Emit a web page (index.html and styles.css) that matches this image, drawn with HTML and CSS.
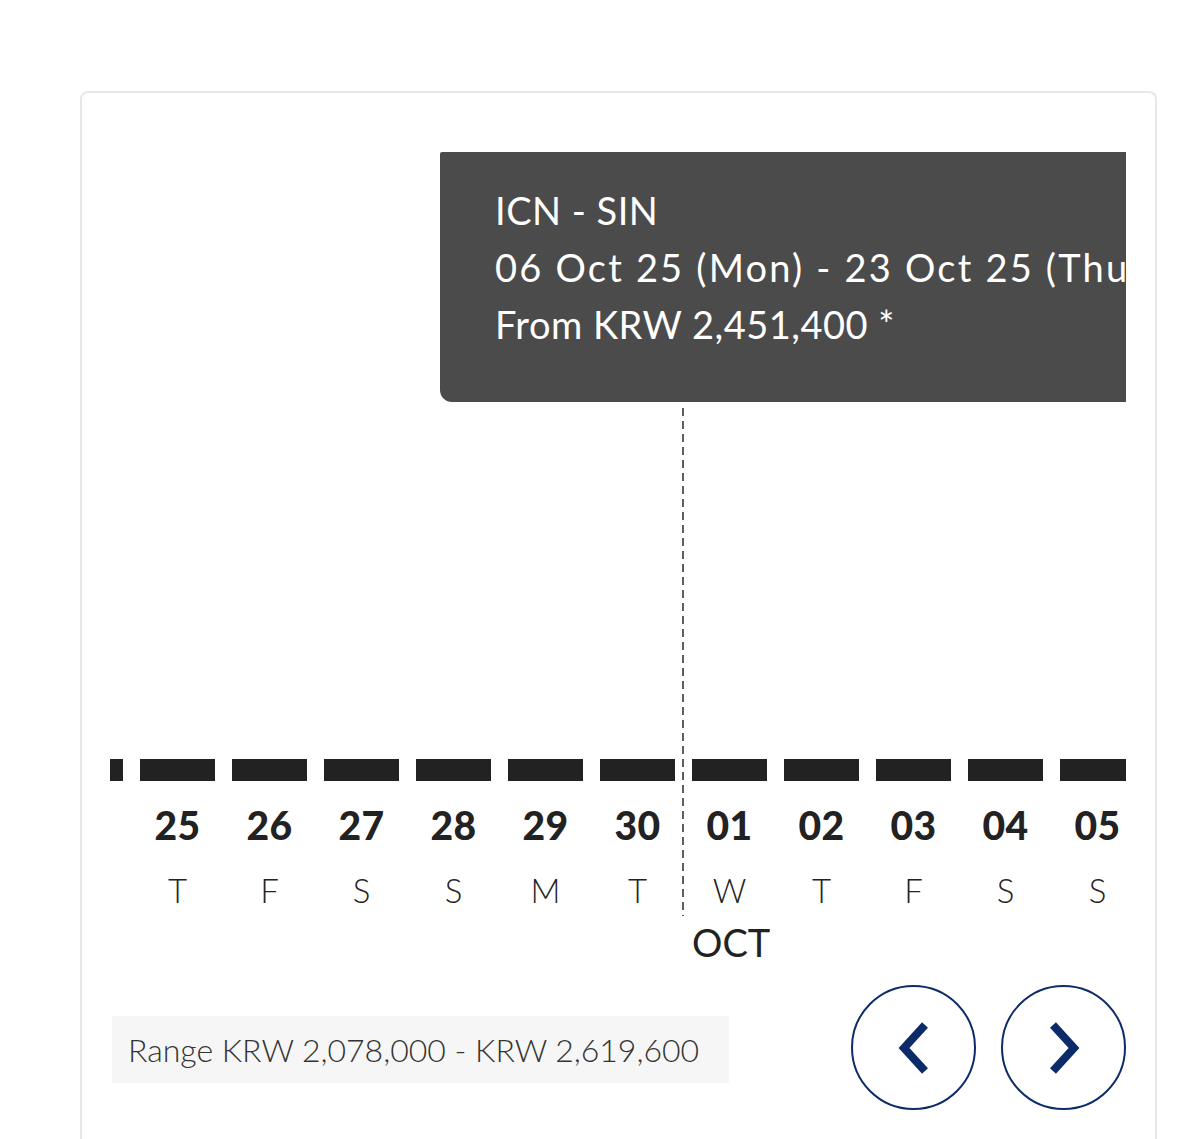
FILE: index.html
```html
<!DOCTYPE html>
<html lang="en">
<head>
    <meta charset="UTF-8">
    <meta name="viewport" content="width=device-width, initial-scale=1.0">
    <title>Fare Calendar</title>
    <link rel="stylesheet" href="styles.css">
</head>
<body>
    <div class="card">
        <div class="chart">
            <div class="tooltip">
                <p>ICN - SIN</p>
                <p class="dates">06 Oct 25 (Mon) - 23 Oct 25 (Thu)</p>
                <p>From KRW 2,451,400 *</p>
            </div>
            <div class="guide"></div>

            <div class="days">
                <div class="day"><div class="bar"></div></div>
                <div class="day"><div class="bar"></div><div class="num">25</div><div class="dow">T</div></div>
                <div class="day"><div class="bar"></div><div class="num">26</div><div class="dow">F</div></div>
                <div class="day"><div class="bar"></div><div class="num">27</div><div class="dow">S</div></div>
                <div class="day"><div class="bar"></div><div class="num">28</div><div class="dow">S</div></div>
                <div class="day"><div class="bar"></div><div class="num">29</div><div class="dow">M</div></div>
                <div class="day"><div class="bar"></div><div class="num">30</div><div class="dow">T</div></div>
                <div class="day"><div class="bar"></div><div class="num">01</div><div class="dow">W</div><div class="month">OCT</div></div>
                <div class="day"><div class="bar"></div><div class="num">02</div><div class="dow">T</div></div>
                <div class="day"><div class="bar"></div><div class="num">03</div><div class="dow">F</div></div>
                <div class="day"><div class="bar"></div><div class="num">04</div><div class="dow">S</div></div>
                <div class="day"><div class="bar"></div><div class="num">05</div><div class="dow">S</div></div>
            </div>
        </div>

        <div class="footer">
            <div class="range">Range KRW 2,078,000 - KRW 2,619,600</div>
            <div class="arrows">
                <button class="arrow" aria-label="Previous">
                    <svg width="36" height="56" viewBox="0 0 36 56"><polyline points="29,5 8,28 29,51" /></svg>
                </button>
                <button class="arrow" aria-label="Next">
                    <svg width="36" height="56" viewBox="0 0 36 56"><polyline points="7,5 28,28 7,51" /></svg>
                </button>
            </div>
        </div>
    </div>
</body>
</html>
```

FILE: styles.css
```css
body {
    margin: 0;
    background-color: #fff;
    font-family: "Lato", "Noto Sans", sans-serif;
    color: #222;
}
.card {
    box-sizing: border-box;
    width: 1077px;
    height: 1048px;
    margin: 91px 0 0 80px;
    padding: 0 29px 0 28px;
    border: 2px solid #e8e8ea;
    border-bottom: none;
    border-radius: 8px 8px 0 0;
    overflow: hidden;
}
.chart {
    position: relative;
    height: 892px;
    overflow: hidden;
}
.tooltip {
    position: absolute;
    left: 330px;
    top: 59px;
    width: 760px;
    height: 250px;
    box-sizing: border-box;
    padding: 30px 0 0 55px;
    background-color: #4b4b4b;
    border-radius: 2px 0 0 12px;
    color: #fff;
    font-size: 38px;
    letter-spacing: 0.5px;
    white-space: nowrap;
}
.tooltip p {
    margin: 0;
    line-height: 57px;
}
.tooltip .dates {
    letter-spacing: 2.2px;
}
.guide {
    position: absolute;
    left: 572px;
    top: 315px;
    width: 2px;
    height: 508px;
    background: repeating-linear-gradient(to bottom, #5e5e5e 0, #5e5e5e 8px, transparent 8px, transparent 13px);
}
.days {
    display: flex;
    gap: 17px;
    margin-left: -62px;
    padding-top: 666px;
}
.day {
    flex-shrink: 0;
    width: 75px;
    text-align: center;
}
.bar {
    height: 22px;
    background-color: #222;
}
.num {
    margin-top: 22px;
    font-size: 39px;
    font-weight: 900;
    line-height: 44px;
    letter-spacing: 0.5px;
}
.dow {
    margin-top: 23px;
    font-size: 33px;
    font-weight: 300;
    line-height: 40px;
}
.month {
    margin-top: 10px;
    font-size: 38px;
    line-height: 44px;
}
.footer {
    display: flex;
    justify-content: space-between;
    align-items: center;
}
.range {
    margin: 4px 0 0 2px;
    padding: 0 30px 0 16px;
    height: 67px;
    line-height: 68px;
    background-color: #f6f6f6;
    font-size: 32px;
    font-weight: 300;
    color: #333;
}
.arrows {
    display: flex;
    gap: 25px;
}
.arrow {
    display: flex;
    align-items: center;
    justify-content: center;
    width: 125px;
    height: 125px;
    padding: 0;
    background: #fff;
    border: 2.5px solid #0c2c69;
    border-radius: 50%;
    cursor: pointer;
}
.arrow polyline {
    fill: none;
    stroke: #0c2c69;
    stroke-width: 8;
}
```
